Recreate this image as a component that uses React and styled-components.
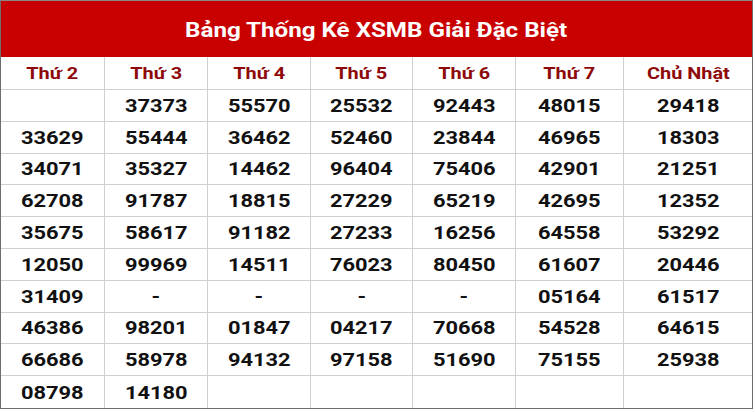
import React from 'react'
import styled, { createGlobalStyle } from 'styled-components'

const Global = createGlobalStyle`
body{
  margin:0;
  background:#fff;
  font-family: Roboto, "Liberation Sans", Arial, sans-serif;
}
`

const Board = styled.div`
width: 753px;
height: 409px;
box-sizing: border-box;
border: 1px solid #6e6e6e;
border-top-color: #8a8a8a;
display: flex;
flex-direction: column;
overflow: hidden;
`

const Title = styled.div`
height: 56px;
background: #c80000;
color: #fff;
font-size: 21px;
font-weight: 700;
display: flex;
align-items: center;
justify-content: center;
padding-top: 2px;
box-sizing: border-box;
`

const Wide = styled.span`
display: inline-block;
white-space: nowrap;
transform: scaleX(${(p) => p.$x || 1.15});
`

const Grid = styled.div`
flex: 1;
display: grid;
grid-template-columns: 104px 103px 103px 102px 103px 108px 1fr;
grid-template-rows: 33px repeat(10, 1fr);
`

const Cell = styled.div`
display: flex;
align-items: center;
justify-content: center;
border-right: 1px solid #cfcfcf;
border-bottom: ${(p) => (p.$last ? 'none' : '1px solid #cfcfcf')};
font-weight: 700;
font-size: ${(p) => (p.$head ? '17px' : '19px')};
color: ${(p) => (p.$head ? '#8e0a0a' : '#111')};
&:nth-child(7n){
  border-right: none;
}
`

const days = ['Thứ 2', 'Thứ 3', 'Thứ 4', 'Thứ 5', 'Thứ 6', 'Thứ 7', 'Chủ Nhật']

const rows = [
  ['', '37373', '55570', '25532', '92443', '48015', '29418'],
  ['33629', '55444', '36462', '52460', '23844', '46965', '18303'],
  ['34071', '35327', '14462', '96404', '75406', '42901', '21251'],
  ['62708', '91787', '18815', '27229', '65219', '42695', '12352'],
  ['35675', '58617', '91182', '27233', '16256', '64558', '53292'],
  ['12050', '99969', '14511', '76023', '80450', '61607', '20446'],
  ['31409', '-', '-', '-', '-', '05164', '61517'],
  ['46386', '98201', '01847', '04217', '70668', '54528', '64615'],
  ['66686', '58978', '94132', '97158', '51690', '75155', '25938'],
  ['08798', '14180', '', '', '', '', ''],
]

export default function App() {
  return (
    <>
      <Global />
      <Board>
        <Title>
          <Wide $x={1.15}>Bảng Thống Kê XSMB Giải Đặc Biệt</Wide>
        </Title>
        <Grid>
          {days.map((d) => (
            <Cell $head key={d}>
              <Wide $x={1.17}>{d}</Wide>
            </Cell>
          ))}
          {rows.map((r, i) =>
            r.map((v, j) => (
              <Cell key={i + '-' + j} $last={i === rows.length - 1}>
                <Wide $x={1.15}>{v}</Wide>
              </Cell>
            ))
          )}
        </Grid>
      </Board>
    </>
  )
}
